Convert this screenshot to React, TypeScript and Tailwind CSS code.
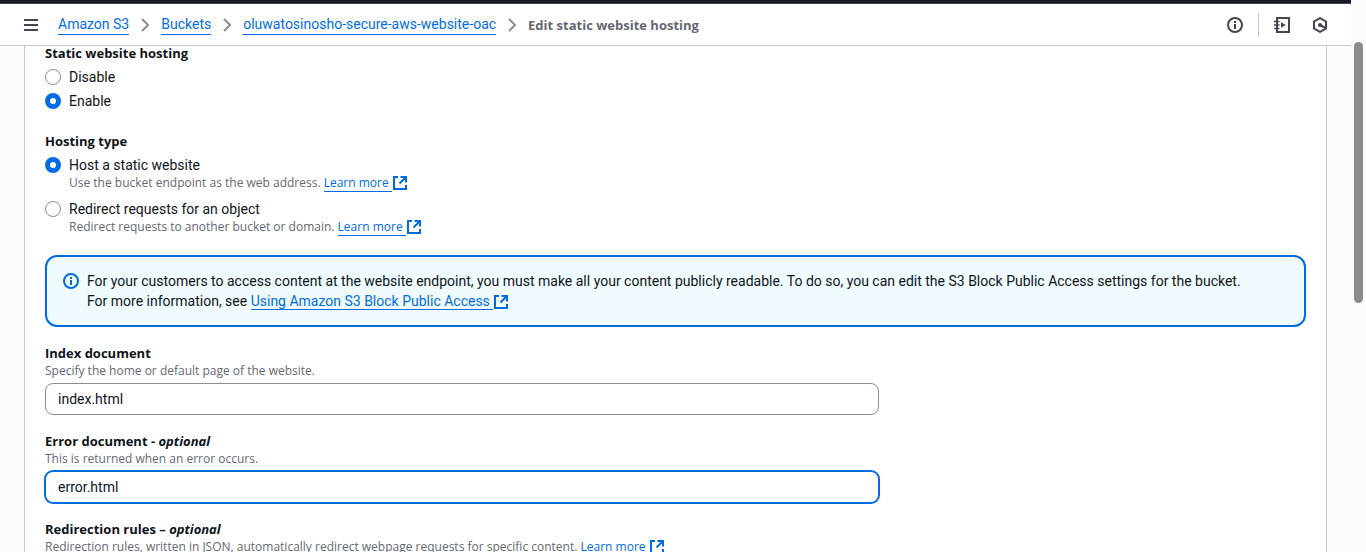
import { useState, type ReactNode } from "react";

const bodyFont = "font-['Roboto','Open_Sans',sans-serif]";
const heading = "font-['Open_Sans','Noto_Sans',sans-serif] text-[13px] font-bold";
const hintText = "font-['Open_Sans','Noto_Sans',sans-serif] text-xs leading-4 text-[#656871]";
const crumbLink = "border-b border-[#006ce0] leading-5 text-[#006ce0]";

function ExternalIcon() {
  return (
    <svg viewBox="0 0 14 14" className="inline-block size-3.5 shrink-0 align-[-3px]" fill="none" stroke="currentColor" strokeWidth="2" aria-hidden="true">
      <path d="M5 1H1v12h12V9" />
      <path d="M7.5 1H13v5.5M13 1 6.5 7.5" />
    </svg>
  );
}

function InfoIcon() {
  return (
    <svg viewBox="0 0 16 16" className="size-4 shrink-0" fill="none" stroke="currentColor" strokeWidth="2" aria-hidden="true">
      <circle cx="8" cy="8" r="7" />
      <path d="M8 7v5M8 4v2" />
    </svg>
  );
}

function ExternalLink({ children }: { children: ReactNode }) {
  return (
    <a href="#" className="whitespace-nowrap text-[#006ce0]">
      <span className="border-b border-[#006ce0] pr-[3px]">{children}</span>
      <span className="pl-px"><ExternalIcon /></span>
    </a>
  );
}

function Separator() {
  return (
    <svg viewBox="0 0 8 14" className="h-3.5 w-2 shrink-0" fill="none" stroke="#8c8c94" strokeWidth="2" aria-hidden="true">
      <path d="m1 1 6 6-6 6" />
    </svg>
  );
}

type RadioProps = {
  name: string;
  label: string;
  checked: boolean;
  onSelect: () => void;
  description?: ReactNode;
};

function Radio({ name, label, checked, onSelect, description }: RadioProps) {
  return (
    <div className="flex gap-2">
      <input
        id={label}
        type="radio"
        name={name}
        checked={checked}
        onChange={onSelect}
        className="mt-0.5 size-4 shrink-0 appearance-none rounded-full border border-[#8c8c94] bg-white checked:border-5 checked:border-[#006ce0]"
      />
      <div>
        <label htmlFor={label} className="block text-sm leading-5">{label}</label>
        {description && <p className={hintText}>{description}</p>}
      </div>
    </div>
  );
}

type FieldProps = { id: string; label: ReactNode; hint: ReactNode; children?: ReactNode };

function Field({ id, label, hint, children }: FieldProps) {
  return (
    <div>
      <label htmlFor={id} className={`${heading} block leading-5`}>{label}</label>
      <p className={hintText}>{hint}</p>
      <div className="mt-1 grid grid-cols-3 gap-5">{children}</div>
    </div>
  );
}

const inputStyle =
  "col-span-2 h-8 rounded-lg border border-[#8c8c94] bg-white px-3 text-sm outline-none focus:border-[#006ce0] focus:ring-1 focus:ring-[#006ce0]";

export default function App() {
  const [hosting, setHosting] = useState("enable");
  const [type, setType] = useState("static");
  const [indexDoc, setIndexDoc] = useState("index.html");
  const [errorDoc, setErrorDoc] = useState("error.html");
  const [rules, setRules] = useState("");

  return (
    <div className={`${bodyFont} flex h-screen overflow-hidden bg-[#fcfcfd] text-sm text-[#0f141a]`}>
      <div className="flex min-w-0 flex-1 flex-col">
        <div className="h-1 shrink-0 border-b border-[#424650] bg-[#161d26]" />
        <header className="relative z-10 flex h-[42px] shrink-0 items-center border-b border-[#c6c6cd] bg-white pr-[23px] pl-6">
          <button type="button" aria-label="Open navigation" className="mr-5 text-[#424650]">
            <svg viewBox="0 0 14 12" className="h-3 w-3.5" stroke="currentColor" strokeWidth="2" aria-hidden="true">
              <path d="M0 1h14M0 6h14M0 11h14" />
            </svg>
          </button>
          <nav aria-label="Breadcrumbs" className="flex items-center gap-3 whitespace-nowrap">
            <a href="#" className={crumbLink}>Amazon S3</a>
            <Separator />
            <a href="#" className={crumbLink}>Buckets</a>
            <Separator />
            <a href="#" className={crumbLink}>oluwatosinosho-secure-aws-website-oac</a>
            <Separator />
            <span className={`${heading} leading-5 text-[#656871]`}>Edit static website hosting</span>
          </nav>
          <div className="ml-auto flex items-center text-[#424650]">
            <button type="button" aria-label="Info"><InfoIcon /></button>
            <span className="mr-[15px] ml-[15px] h-6 w-px bg-[#c6c6cd]" />
            <button type="button" aria-label="Tutorials">
              <svg viewBox="0 0 16 16" className="size-4" fill="none" stroke="currentColor" strokeWidth="2" aria-hidden="true">
                <path d="M3 1h12v14H3z" />
                <path d="M0 4.500h5.500M0 8h5.500M0 11.500h5.500" strokeWidth="1.500" />
                <path d="M7 5.200v5.600L11.800 8z" fill="currentColor" stroke="none" />
              </svg>
            </button>
            <button type="button" aria-label="Diagnostics" className="ml-[22px]">
              <svg viewBox="0 0 16 16" className="size-4" fill="none" stroke="currentColor" strokeWidth="2" aria-hidden="true">
                <path d="M8 1.100 14 4.500v7L8 14.900 2 11.500v-7z" />
                <circle cx="8" cy="8" r="2" fill="currentColor" stroke="none" />
                <path d="m8 8 5.500 3" />
              </svg>
            </button>
          </div>
        </header>
        <main className="mx-6 -mt-[3px] flex-1 border-x border-[#c6c6cd] bg-white px-5">
          <form className="flex flex-col gap-4">
            <div className="flex flex-col gap-5">
              <fieldset>
                <legend className={`${heading} mb-1 leading-5`}>Static website hosting</legend>
                <div className="flex flex-col gap-1">
                  <Radio name="hosting" label="Disable" checked={hosting === "disable"} onSelect={() => setHosting("disable")} />
                  <Radio name="hosting" label="Enable" checked={hosting === "enable"} onSelect={() => setHosting("enable")} />
                </div>
              </fieldset>
              <fieldset>
                <legend className={`${heading} mb-1 leading-5`}>Hosting type</legend>
                <div className="flex flex-col gap-2">
                  <Radio
                    name="type"
                    label="Host a static website"
                    checked={type === "static"}
                    onSelect={() => setType("static")}
                    description={<>Use the bucket endpoint as the web address. <ExternalLink>Learn more</ExternalLink></>}
                  />
                  <Radio
                    name="type"
                    label="Redirect requests for an object"
                    checked={type === "redirect"}
                    onSelect={() => setType("redirect")}
                    description={<>Redirect requests to another bucket or domain. <ExternalLink>Learn more</ExternalLink></>}
                  />
                </div>
              </fieldset>
              <div role="note" className="flex gap-2 rounded-xl border-2 border-[#006ce0] bg-[#f0fbff] px-4 py-3.5">
                <span className="mt-0.5 text-[#006ce0]"><InfoIcon /></span>
                <p className="leading-5">
                  For your customers to access content at the website endpoint, you must make all your content publicly readable. To do so, you can edit the S3 Block Public Access settings for the bucket.{" "}
                  <br />
                  For more information, see <ExternalLink>Using Amazon S3 Block Public Access</ExternalLink>
                </p>
              </div>
            </div>
            <Field id="index" label="Index document" hint="Specify the home or default page of the website.">
              <input id="index" value={indexDoc} onChange={(e) => setIndexDoc(e.target.value)} className={inputStyle} />
            </Field>
            <Field id="error" label={<>Error document - <i>optional</i></>} hint="This is returned when an error occurs.">
              <input
                id="error"
                value={errorDoc}
                onChange={(e) => setErrorDoc(e.target.value)}
                className="col-span-2 h-8 rounded-lg border border-[#006ce0] bg-white px-3 text-sm ring-1 ring-[#006ce0] outline-none"
              />
            </Field>
            <Field
              id="rules"
              label={<>Redirection rules – <i>optional</i></>}
              hint={<>Redirection rules, written in JSON, automatically redirect webpage requests for specific content. <ExternalLink>Learn more</ExternalLink></>}
            >
              <textarea id="rules" value={rules} onChange={(e) => setRules(e.target.value)} className={inputStyle} />
            </Field>
          </form>
        </main>
      </div>
      <div className="w-[15px] shrink-0 pt-[42px] pr-[3px] pl-[3px]" aria-hidden="true">
        <div className="h-[261px] rounded-full bg-[#8b8b8b]" />
      </div>
    </div>
  );
}
